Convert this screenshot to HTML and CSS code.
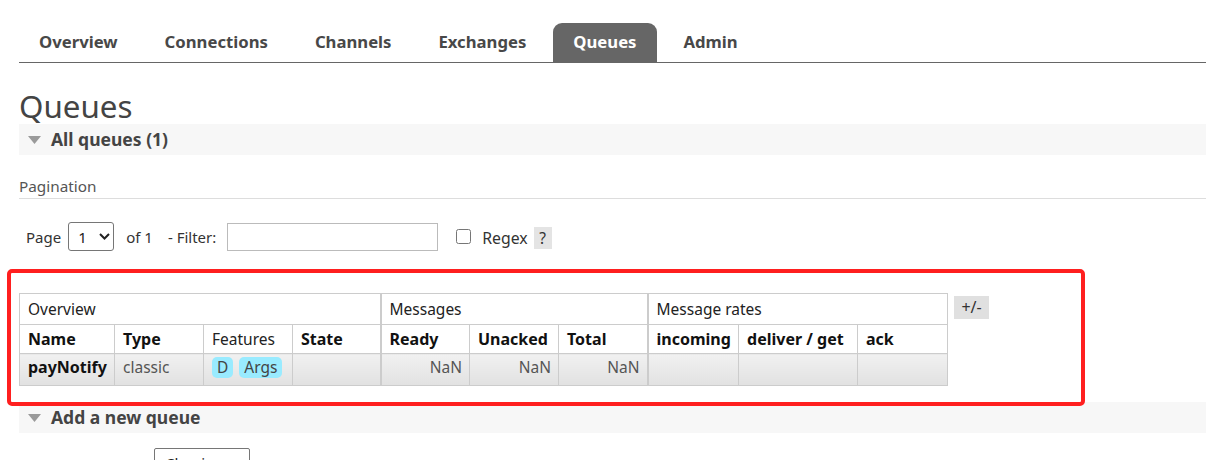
FILE: index.html
```html
<!DOCTYPE html>
<html lang="en">
<head>
<meta charset="utf-8">
<title>Queues</title>
<link rel="stylesheet" href="styles.css">
</head>
<body>
<div class="page">
  <ul class="tabs">
    <li class="tab">Overview</li>
    <li class="tab">Connections</li>
    <li class="tab">Channels</li>
    <li class="tab">Exchanges</li>
    <li class="tab active">Queues</li>
    <li class="tab">Admin</li>
  </ul>

  <h1 class="title">Queues</h1>

  <div class="section-bar">
    <svg class="tri" width="13" height="8" viewBox="0 0 13 8"><polygon points="0,0 13,0 6.5,8" fill="#9a9a9a"/></svg>
    <span>All queues (1)</span>
  </div>

  <h3 class="pag-title">Pagination</h3>

  <div class="page-row">
    <span>Page</span>
    <span class="select-wrap">
      <select class="sel"><option>1</option></select>
      <svg class="chev" width="11" height="7" viewBox="0 0 11 7"><polyline points="1,1 5.5,5.5 10,1" fill="none" stroke="#222" stroke-width="2"/></svg>
    </span>
    <span class="of">of 1</span>
    <span class="flt">- Filter:</span>
    <input class="filter" type="text">
    <input class="chk" type="checkbox">
    <span class="regex">Regex</span>
    <span class="help">?</span>
  </div>

  <div class="table-row">
    <table class="qtable">
      <colgroup>
        <col class="w-name"><col class="w-type"><col class="w-feat"><col class="w-state">
        <col class="w-ready"><col class="w-unack"><col class="w-total">
        <col class="w-inc"><col class="w-del"><col class="w-ack">
      </colgroup>
      <tr class="r-group">
        <th colspan="4">Overview</th>
        <th colspan="3" class="gstart">Messages</th>
        <th colspan="3" class="gstart">Message rates</th>
      </tr>
      <tr class="r-head">
        <th>Name</th><th>Type</th><th class="plain">Features</th><th>State</th>
        <th class="gstart">Ready</th><th>Unacked</th><th>Total</th>
        <th class="gstart">incoming</th><th>deliver / get</th><th>ack</th>
      </tr>
      <tr class="r-data">
        <td class="qname">payNotify</td>
        <td class="muted">classic</td>
        <td><span class="badge">D</span><span class="badge">Args</span></td>
        <td></td>
        <td class="num gstart">NaN</td>
        <td class="num">NaN</td>
        <td class="num">NaN</td>
        <td class="gstart"></td>
        <td></td>
        <td></td>
      </tr>
    </table>
    <span class="pm">+/-</span>
  </div>

  <div class="section-bar add-bar">
    <svg class="tri" width="13" height="8" viewBox="0 0 13 8"><polygon points="0,0 13,0 6.5,8" fill="#9a9a9a"/></svg>
    <span>Add a new queue</span>
  </div>

  <div class="add-form">
    <span class="type-sel">Classic</span>
  </div>
</div>
<div class="highlight"></div>
</body>
</html>
```

FILE: styles.css
```css
html, body {
  margin: 0;
  padding: 0;
  background: #fff;
}
body {
  position: relative;
  font-family: "Noto Sans", "Liberation Sans", sans-serif;
  color: #444;
  height: 460px;
  overflow: hidden;
}
.page {
  padding: 23px 0 0 19px;
}
.tabs {
  display: flex;
  gap: 7px;
  list-style: none;
  margin: 0;
  padding: 0;
  border-bottom: 1px solid #666;
}
.tab {
  padding: 0 20px;
  height: 39px;
  line-height: 37px;
  font-weight: 700;
  font-size: 16.7px;
  color: #484848;
}
.tab.active {
  background: #666;
  color: #fff;
  border-radius: 9px 9px 0 0;
}
.title {
  margin: 25px 0 0;
  font-size: 31.3px;
  font-weight: 400;
  line-height: 36px;
  color: #444;
}
.section-bar {
  height: 31px;
  box-sizing: border-box;
  background: #f7f7f7;
  display: flex;
  align-items: center;
  gap: 10px;
  padding: 0 0 2px 9px;
  font-weight: 700;
  font-size: 17.5px;
  color: #444;
}
.tri {
  display: block;
  margin-top: 2px;
}
.pag-title {
  margin: 21px 0 0;
  font-size: 15.3px;
  font-weight: 400;
  line-height: 20px;
  padding-bottom: 2px;
  border-bottom: 1px solid #ddd;
  color: #555;
}
.page-row {
  margin-top: 23px;
  display: flex;
  align-items: center;
  height: 29px;
  padding-left: 7px;
  font-size: 15px;
  color: #333;
}
.select-wrap {
  position: relative;
  margin-left: 7px;
  display: block;
}
.sel {
  appearance: none;
  -webkit-appearance: none;
  display: block;
  width: 46px;
  height: 29px;
  box-sizing: border-box;
  border: 1px solid #767676;
  border-radius: 3px;
  background: #fff;
  font-family: inherit;
  font-size: 15px;
  color: #222;
  padding: 0 0 0 9px;
}
.chev {
  position: absolute;
  left: 31px;
  top: 11px;
}
.of {
  margin-left: 12px;
}
.flt {
  margin-left: 15px;
}
.filter {
  margin: 0 0 0 11px;
  width: 211px;
  height: 28px;
  box-sizing: border-box;
  border: 1px solid #bbb;
  padding: 0;
}
.chk {
  margin: 0 0 0 18px;
  width: 15px;
  height: 15px;
}
.regex {
  margin-left: 11px;
  margin-top: 2px;
  font-size: 15.8px;
}
.help {
  margin-left: 6px;
  margin-top: 2px;
  width: 18px;
  height: 22px;
  line-height: 22px;
  text-align: center;
  background: #e4e4e4;
  color: #333;
  font-size: 15.5px;
}
.table-row {
  margin-top: 42px;
  display: flex;
  align-items: flex-start;
  gap: 6px;
}
.qtable {
  border-collapse: collapse;
  table-layout: fixed;
  width: 928px;
}
.w-name { width: 95px; }
.w-type { width: 89px; }
.w-feat { width: 89px; }
.w-state { width: 88px; }
.w-ready { width: 89px; }
.w-unack { width: 89px; }
.w-total { width: 89px; }
.w-inc { width: 91px; }
.w-del { width: 119px; }
.w-ack { width: 90px; }
.qtable th,
.qtable td {
  border: 1px solid #ccc;
  padding: 0 7px 0 8px;
  text-align: left;
  white-space: nowrap;
}
.qtable .gstart {
  border-left: 2px solid #ccc;
}
.r-group th {
  height: 30px;
  font-weight: 400;
  font-size: 15.5px;
  color: #222;
}
.r-head th {
  height: 28px;
  font-weight: 700;
  font-size: 16px;
  color: #111;
}
.r-head th.plain {
  font-weight: 400;
  font-size: 15.5px;
  color: #222;
}
.r-data td {
  height: 32px;
  box-sizing: border-box;
  vertical-align: top;
  padding-top: 3px;
  line-height: 21px;
  background: linear-gradient(#f1f1f1, #e1e1e1);
  font-size: 15.5px;
}
.qname {
  font-weight: 700;
  font-size: 16px !important;
  color: #111;
}
.muted {
  color: #555;
}
.num {
  text-align: right !important;
  color: #555;
}
.badge {
  display: inline-block;
  background: #99ebff;
  color: #444;
  border-radius: 5px;
  padding: 0 5px;
  margin-right: 6px;
  line-height: 21px;
}
.pm {
  margin-top: 3px;
  display: block;
  width: 35px;
  height: 23px;
  line-height: 23px;
  text-align: center;
  background: #e0e0e0;
  font-size: 16px;
  color: #333;
}
.add-bar {
  margin-top: 16px;
}
.add-form {
  margin-top: 15px;
  padding-left: 135px;
}
.type-sel {
  display: block;
  width: 96px;
  height: 30px;
  box-sizing: border-box;
  border: 1px solid #767676;
  border-radius: 2px;
  padding-left: 10px;
  line-height: 28px;
  font-size: 15px;
  color: #222;
}
.highlight {
  position: absolute;
  left: 7px;
  top: 269px;
  width: 1078px;
  height: 137px;
  box-sizing: border-box;
  border: 4px solid #ff1f1f;
  border-radius: 5px;
  pointer-events: none;
}
```
